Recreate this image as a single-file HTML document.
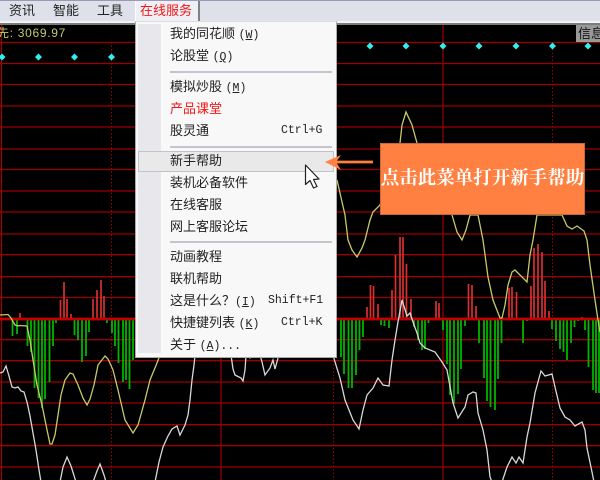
<!DOCTYPE html>
<html><head><meta charset="utf-8">
<style>
html,body{margin:0;padding:0;background:#000}
#r{position:relative;width:600px;height:480px;overflow:hidden;background:#000;font-family:"Liberation Sans","Noto Sans CJK SC",sans-serif}
#r div{position:absolute}
svg{position:absolute;left:0;top:0}
.m{font-size:13px;line-height:16px;color:#222;white-space:pre}
.i{position:absolute;left:170px;font-size:13px;line-height:16px;color:#222;white-space:pre}
.i b{font-family:"Liberation Mono",monospace;font-weight:400;font-size:11.5px}
.k{position:absolute;font-family:"Liberation Mono",monospace;font-size:11.5px;line-height:16px;color:#222;white-space:pre}
.s{position:absolute;left:170px;width:162px;height:2px;background:#c4c4cc}
</style></head><body><div id="r">
<svg width="600" height="480" viewBox="0 0 600 480" fill="none">
<g stroke="#9c0000" stroke-width="1.3">
<path d="M0 42.5H600M0 63.5H600M0 84.5H600M0 106H600M0 127H600M0 149H600M0 169.5H600M0 191H600M0 212H600M0 234H600M0 254.7H600M0 276.7H600M0 297.5H600M0 339.7H600M0 360.7H600M0 382H600M0 403H600M0 424.7H600M0 445.7H600M0 467H600"/>
</g>
<g stroke="#a00000" stroke-width="1.2"><path d="M1.5 24V480M221 24V480M443 24V480"/></g>
<g stroke="#a00000" stroke-width="1" stroke-dasharray="1.5 2"><path d="M111.5 42V480M333.5 42V480M552.5 42V480"/></g>
<g fill="#33eeee"><path d="M2 53.5l3.5 3.5-3.5 3.5-3.5-3.5zM38.5 53.5l3.5 3.5-3.5 3.5-3.5-3.5zM74.5 53.5l3.5 3.5-3.5 3.5-3.5-3.5zM111.5 53.5l3.5 3.5-3.5 3.5-3.5-3.5zM370 42.5l3.5 3.5-3.5 3.5-3.5-3.5zM406 42.5l3.5 3.5-3.5 3.5-3.5-3.5zM443 42.5l3.5 3.5-3.5 3.5-3.5-3.5zM479 42.5l3.5 3.5-3.5 3.5-3.5-3.5zM516 42.5l3.5 3.5-3.5 3.5-3.5-3.5zM552.5 42.5l3.5 3.5-3.5 3.5-3.5-3.5zM588 42.5l3.5 3.5-3.5 3.5-3.5-3.5z"/></g>
<g stroke="#d83030" stroke-width="1.7"><path d="M20 313V319M60.500 300V319M64 282V319M67 299V319M71 314V319M93 299V319M97 290V319M101 280V319M104 296V319M367 307V319M370.500 285V319M373.500 286V319M378 304V319M392 290V319M395.500 255V319M400 237V319M403 237V319M406.500 264V319M411 299V319M436 301V319M439 303V319M468.500 284V319M472 285V319M476 306V319M509 288V319M512 287V319M516.500 292V319M531 286V319M534 248V319M538 244V319M542 252V319M545 281V319M549 311V319M582 317V319"/></g>
<g stroke="#00b400" stroke-width="1.8"><path d="M12.500 319V336M17 319V334M27.500 319V346M31 319V352M34.500 319V388M38.500 319V398M42 319V408M45 319V399M49.500 319V382M53 319V346M56 319V323M74.500 319V335M78 319V340M82 319V362M86 319V356M89 319V332M107 319V323M112 319V333M115 319V346M118.500 319V363M123 319V382M126 319V380M129.500 319V389M133 319V360M341 319V357M344 319V374M348.500 319V388M352 319V388M356 319V375M359.500 319V350M363 319V337M381 319V325M384.500 319V326M389 319V328M414 319V327M418 319V340M422 319V350M425 319V349M428.500 319V323M443 319V330M447 319V364M450 319V395M454 319V404M458 319V394M461 319V369M465 319V326M479 319V343M484 319V378M487 319V401M490.500 319V407M495 319V410M498 319V379M501.500 319V343M523 319V343M527 319V321M552 319V329M556 319V341M560 319V349M563.500 319V352M567 319V360M571 319V343M574.500 319V327M578 319V321M585 319V330M588.500 319V367M593 319V390M596 319V393M599 319V393"/></g>
<path d="M0 319H600" stroke="#c40000" stroke-width="2.8"/>
<polyline stroke="#d8d8d8" stroke-width="1.3" points="0,373 3,372 6,366 9,376 12,387 15,388 18,387 21,391 24,392 27,402 30,416 33,433 36,450 39,470 41,482"/>
<polyline stroke="#d8d8d8" stroke-width="1.3" points="60,482 63,467 67,457 71,466 76,482"/>
<polyline stroke="#d8d8d8" stroke-width="1.3" points="93,482 97,471 100,464 104,475 106,482"/>
<polyline stroke="#d8d8d8" stroke-width="1.3" points="155,482 159,462 163,447 168,436 172,429 177,426 180,435 185,425 188,415 190,400 192,380 194,365 195,355"/>
<polyline stroke="#d8d8d8" stroke-width="1.3" points="231,355 233,369 235,375 241,378 243,381 245,370 246,355"/>
<polyline stroke="#d8d8d8" stroke-width="1.3" points="248,355 250,358 253,356"/>
<polyline stroke="#d8d8d8" stroke-width="1.3" points="260,355 262,362 265,375 270,368 273,360 275,369 278,358"/>
<polyline stroke="#d8d8d8" stroke-width="1.3" points="333,355 335,362 340,378 345,400 353,420 359,429 363,410 367,395 373,388 378,378 383,385 389,386 392,360 395,340 398,322 402,300 407,316 410,313 413,322 417,333 420,343 425,348 435,352 442,362 447,370 453,403 458,418 465,407 468,395 473,392 476,393 478,413 483,430 487,450 490,477 492,482"/>
<polyline stroke="#d8d8d8" stroke-width="1.3" points="502,482 507,467 512,457 516,463 519,457 523,463 527,437 530,423 535,393 541,371 545,376 552,374 555,387 560,408 565,417 570,420 575,426 582,422 585,430 587,448 592,472 594,482"/>
<polyline stroke="#c8c86a" stroke-width="1.3" points="0,315 8,314.500 11,318 15,325 18,326 20,325.500 27,326 30,340 33,360 37,385 42,405 46,425 50,444 52,444 55,435 58,415 61,395 65,380 70,373 73,374 78,385 83,398 87,405 90,399 94,385 98,365 105,356 108,359 113,370 118,390 125,420 133,433 138,425 145,400 150,380 157,363 160,355"/>
<polyline stroke="#c8c86a" stroke-width="1.3" points="337,180 345,215 348,240 352,250 357,257 362,248 365,240 370,220 373,212 380,205 400,143 402,125 406,112 412,125 417,143 452,215 457,232 462,240 466,230 470,215 478,215 483,240 488,277 493,300 500,318 502,318 505,305 508,285 512,272 515,270 520,275 527,282 530,255 533,240 537,215 562,215 567,226 572,229 577,226 584,231 587,240 590,265 595,300 598,320 600,332"/>
</svg>

<div style="left:0;top:0;width:600px;height:1px;background:#9a9ab8"></div>
<div style="left:0;top:1px;width:600px;height:20px;background:#dfe1ea"></div>
<div style="left:0;top:21px;width:600px;height:2px;background:#f2f3f7"></div>
<div style="left:0;top:23px;width:600px;height:2px;background:#7c7c78"></div>
<div class="m" style="left:9px;top:3px">资讯</div>
<div class="m" style="left:53px;top:3px">智能</div>
<div class="m" style="left:97px;top:3px">工具</div>
<div style="left:135px;top:1px;width:62px;height:20px;background:#eef0f5;border-left:1px solid #fff;border-right:2px solid #808080"></div>
<div class="m" style="left:140px;top:3px;color:#f01818">在线服务</div>
<div style="left:-3px;top:25px;font-size:12px;line-height:16px;color:#c8c86a;white-space:pre;letter-spacing:.7px">先: 3069.97</div>
<div style="left:576px;top:25px;width:24px;height:17px;background:#999;overflow:hidden"><span style="position:absolute;left:2px;top:0;font-size:13px;line-height:17px;color:#111;white-space:pre">信息</span></div>

<div style="left:135px;top:21px;width:200px;height:335px;background:#f8f8f8;border:1px solid #aaa;border-top-color:#ddd"></div>
<div style="left:138px;top:24px;width:23px;height:329px;background:#e7e7ec"></div>
<span class="i" style="top:26px;z-index:2">我的同花顺 <b>(<u>W</u>)</b></span>
<span class="i" style="top:48px">论股堂 <b>(<u>Q</u>)</b></span>
<span class="s" style="top:71px"></span>
<span class="i" style="top:79px">模拟炒股 <b>(<u>M</u>)</b></span>
<span class="i" style="top:101px;color:#f01818">产品课堂</span>
<span class="i" style="top:123px">股灵通</span>
<span class="k" style="left:281px;top:123px">Ctrl+G</span>
<span class="s" style="top:146px"></span>
<div style="left:138px;top:151px;width:194px;height:19px;background:#e9e9e9;border:1px solid #c2c2cc"></div>
<span class="i" style="top:153px">新手帮助</span>
<span class="i" style="top:175px">装机必备软件</span>
<span class="i" style="top:197px">在线客服</span>
<span class="i" style="top:219px">网上客服论坛</span>
<span class="s" style="top:241px"></span>
<span class="i" style="top:249px">动画教程</span>
<span class="i" style="top:271px">联机帮助</span>
<span class="i" style="top:293px">这是什么？<b>(<u>I</u>)</b></span>
<span class="k" style="left:268px;top:293px">Shift+F1</span>
<span class="i" style="top:315px">快捷键列表 <b>(<u>K</u>)</b></span>
<span class="k" style="left:281px;top:315px">Ctrl+K</span>
<span class="i" style="top:337px">关于 <b>(<u>A</u>)...</b></span>

<div style="left:380px;top:143px;width:203px;height:70px;background:#ff8040;border:1px solid #c86838"></div>
<div style="left:380px;top:166px;width:205px;text-align:center;font-family:'Noto Serif CJK SC','Liberation Serif',serif;font-weight:700;font-size:18.5px;line-height:22px;color:#fff;white-space:pre">点击此菜单打开新手帮助</div>
<svg width="600" height="480" viewBox="0 0 600 480" fill="none">
<path d="M373 162H333" stroke="#ff8040" stroke-width="2.800"/>
<path d="M325 162L341 155L336 162L341 170Z" fill="#ff8040"/>
<path d="M305.500 165V184.500L310 180.500L313.500 188L317 186.500L313.500 179.500L319 179Z" fill="#fff" stroke="#222" stroke-width="1.200" stroke-linejoin="round"/>
</svg>
</div></body></html>
